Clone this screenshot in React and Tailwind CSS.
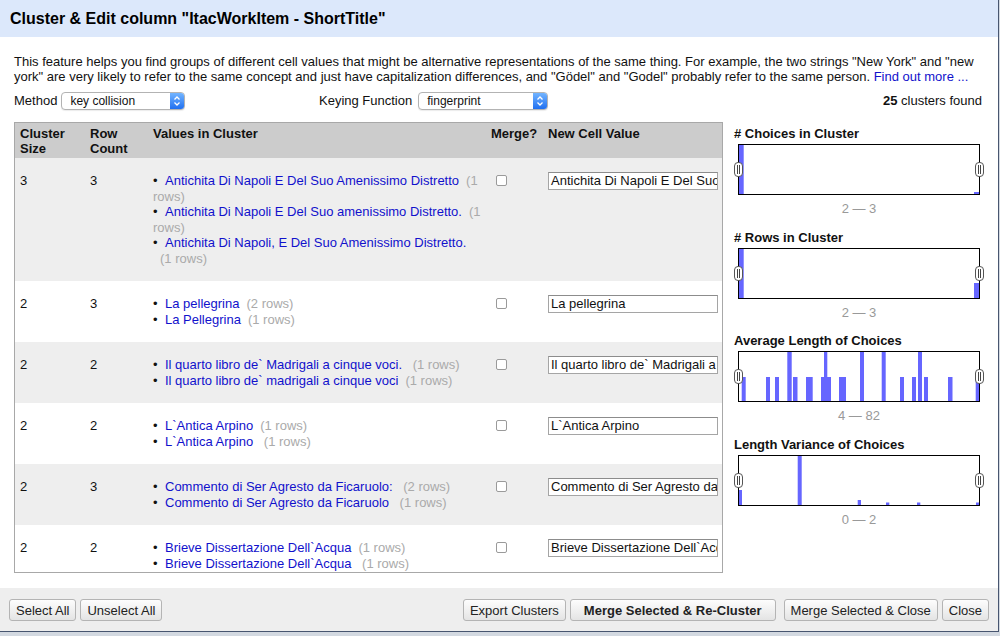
import React from 'react';

const rows = [
  {
    size: 3,
    count: 3,
    values: [
      ['Antichita Di Napoli E Del Suo Amenissimo Distretto', 1],
      ['Antichita Di Napoli E Del Suo amenissimo Distretto.', 1],
      ['Antichita Di Napoli, E Del Suo Amenissimo Distretto.', 1],
    ],
    newValue: 'Antichita Di Napoli E Del Suo Amenissimo Distretto',
  },
  {
    size: 2,
    count: 3,
    values: [
      ['La pellegrina', 2],
      ['La Pellegrina', 1],
    ],
    newValue: 'La pellegrina',
  },
  {
    size: 2,
    count: 2,
    values: [
      ['Il quarto libro de` Madrigali a cinque voci. ', 1],
      ['Il quarto libro de` madrigali a cinque voci', 1],
    ],
    newValue: 'Il quarto libro de` Madrigali a cinque voci.',
  },
  {
    size: 2,
    count: 2,
    values: [
      ['L`Antica Arpino', 1],
      ['L`Antica Arpino ', 1],
    ],
    newValue: 'L`Antica Arpino',
  },
  {
    size: 2,
    count: 3,
    values: [
      ['Commento di Ser Agresto da Ficaruolo: ', 2],
      ['Commento di Ser Agresto da Ficaruolo ', 1],
    ],
    newValue: 'Commento di Ser Agresto da Ficaruolo:',
  },
  {
    size: 2,
    count: 2,
    values: [
      ['Brieve Dissertazione Dell`Acqua', 1],
      ['Brieve Dissertazione Dell`Acqua ', 1],
    ],
    newValue: 'Brieve Dissertazione Dell`Acqua',
  },
];

// bars: [x, width, height] inside a 240x49 plot
const HALF = 24;
const FULL = 49;
const facets = [
  {
    title: '# Choices in Cluster',
    range: '2 — 3',
    bars: [[0, 4.7, FULL], [235, 5, 2]],
  },
  {
    title: '# Rows in Cluster',
    range: '2 — 3',
    bars: [[0, 4.7, FULL], [235, 5, 15]],
  },
  {
    title: 'Average Length of Choices',
    range: '4 — 82',
    bars: [
      [2.7, 4, HALF], [27, 4, HALF], [36, 4, HALF], [48.3, 4.4, FULL],
      [54, 4.5, HALF], [67, 6.7, HALF], [82, 10, HALF], [85, 3.3, FULL],
      [100, 7, HALF], [121, 4, FULL], [142.7, 4, FULL], [161, 4, HALF],
      [173, 4, HALF], [179, 4, FULL], [185, 4, HALF], [209, 4.5, HALF],
      [236.7, 3.3, HALF],
    ],
  },
  {
    title: 'Length Variance of Choices',
    range: '0 — 2',
    bars: [
      [0, 3, 15], [58.7, 4, FULL], [118.7, 3.3, 5], [147, 3.3, 2.5],
      [178, 3.3, 2.5], [237, 3, 2.5],
    ],
  },
];

const Handle = ({ className }) => (
  <svg className={className} width="9" height="15" viewBox="0 0 9 15">
    <rect x="0.5" y="0.5" width="8" height="14" rx="3.5" fill="#fff" stroke="#555" />
    <line x1="3.5" y1="3" x2="3.5" y2="12" stroke="#444" />
    <line x1="5.5" y1="3" x2="5.5" y2="12" stroke="#444" />
  </svg>
);

const Facet = ({ title, range, bars }) => (
  <div className="mb-[13.6px]">
    <div className="font-bold leading-[15px] text-[13px] text-[#111]">{title}</div>
    <div className="relative mt-[3px] ml-[4px] w-[242px] h-[51px] border border-black bg-white">
      <svg className="absolute inset-0" width="240" height="49" viewBox="0 0 240 49">
        {bars.map(([x, w, h], i) => (
          <rect key={i} x={x} y={49 - h} width={w} height={h} fill="#6666ff" />
        ))}
      </svg>
      <Handle className="absolute left-[-5px] top-[17px]" />
      <Handle className="absolute right-[-5px] top-[17px]" />
    </div>
    <div className="mt-[6px] ml-[4px] w-[242px] text-center text-[13px] leading-[15px] text-[#999]">
      {range}
    </div>
  </div>
);

const Select = ({ value, width }) => (
  <div
    className={`flex items-stretch h-[18px] rounded-[4px] border border-[#b3b3b3] bg-white shadow-[0_1px_1px_rgba(0,0,0,0.08)] ${width}`}
  >
    <span className="flex-1 pl-[8px] text-[12px] leading-[16px] text-[#111]">{value}</span>
    <span className="w-[14px] rounded-r-[3px] bg-linear-to-b from-[#72b4ff] to-[#1f6ff0] flex items-center justify-center">
      <svg width="8" height="12" viewBox="0 0 8 12">
        <path d="M1.5 4.5 L4 2 L6.5 4.5 M1.5 7.5 L4 10 L6.5 7.5" fill="none" stroke="#fff" strokeWidth="1.3" />
      </svg>
    </span>
  </div>
);

const Btn = ({ children, bold }) => (
  <button
    className={`h-[22px] rounded-[3px] border border-[#b4b4b4] bg-linear-to-b from-[#fdfdfd] to-[#e4e4e4] text-[13px] leading-none text-[#222] ${
      bold ? 'font-bold px-[13px]' : 'px-[6px]'
    }`}
  >
    {children}
  </button>
);

export default function App() {
  return (
    <div className="w-[1000px] h-[636px] overflow-hidden bg-[#d3d9e1] font-['Liberation_Sans',Arial,sans-serif] text-[13px] text-[#111]">
      <div className="w-[999px] h-[632px] bg-white border-r border-b border-[#485670] flex flex-col">
        {/* title bar */}
        <div className="h-[37px] shrink-0 bg-[#dce8fb] flex items-center pl-[10px]">
          <h1 className="text-[16px] font-bold text-black">
            Cluster &amp; Edit column "ItacWorkItem - ShortTitle"
          </h1>
        </div>

        <div className="pl-[14px] pt-[17px]">
          <p className="leading-[15px] whitespace-nowrap">
            This feature helps you find groups of different cell values that might be alternative representations of the same thing. For example, the two strings "New York" and "new
            <br />
            york" are very likely to refer to the same concept and just have capitalization differences, and "Gödel" and "Godel" probably refer to the same person.{' '}
            <a className="text-[#1111cc]">Find out more ...</a>
          </p>

          <div className="mt-[8px] flex items-center h-[18px] pr-[16px]">
            <div className="w-[305px] flex items-center">
              <span className="mr-[4px]">Method</span>
              <Select value="key collision" width="w-[124px]" />
            </div>
            <div className="flex items-center">
              <span className="mr-[6px]">Keying Function</span>
              <Select value="fingerprint" width="w-[130px]" />
            </div>
            <div className="ml-auto">
              <b>25</b> clusters found
            </div>
          </div>

          <div className="mt-[12px] flex items-start">
            <div className="w-[709px] h-[451px] border border-[#a8a8a8] overflow-hidden">
              <table className="table-fixed border-collapse w-[707px]">
                <colgroup>
                  <col className="w-[70px]" />
                  <col className="w-[63px]" />
                  <col className="w-[338px]" />
                  <col className="w-[57px]" />
                  <col className="w-[179px]" />
                </colgroup>
                <thead>
                  <tr className="bg-[#cccccc] text-left align-top font-bold leading-[15px]">
                    <th className="pl-[5px] pt-[3px] pb-[2px]">Cluster<br />Size</th>
                    <th className="pl-[5px] pt-[3px] pb-[2px]">Row<br />Count</th>
                    <th className="pl-[5px] pt-[3px] pb-[2px]">Values in Cluster</th>
                    <th className="pl-[5px] pt-[3px] pb-[2px]">Merge?</th>
                    <th className="pl-[5px] pt-[3px] pb-[2px]">New Cell Value</th>
                  </tr>
                </thead>
                <tbody>
                  {rows.map((r, i) => (
                    <tr key={i} className={`align-top leading-[15.5px] ${i % 2 === 0 ? 'bg-[#eeeeee]' : 'bg-white'}`}>
                      <td className="pl-[5px] py-[15px]">{r.size}</td>
                      <td className="pl-[5px] py-[15px]">{r.count}</td>
                      <td className="pl-[5px] pr-[4px] py-[15px]">
                        {r.values.map(([v, c], j) => (
                          <div key={j}>
                            <span className="inline-block w-[12px]">•</span>
                            <a className="text-[#1111cc]">{v}</a>
                            <wbr />
                            <span className="pl-[7px] text-[#aaaaaa]">({c} rows)</span>
                          </div>
                        ))}
                      </td>
                      <td className="pl-[10px] py-[15px]">
                        <span className="block mt-[2px] w-[11px] h-[11px] rounded-[2px] border border-[#9a9a9a] bg-white" />
                      </td>
                      <td className="pl-[5px] py-[15px]">
                        <div className="-mt-[1px] w-[170px] h-[18px] border border-[#a5a5a5] border-t-[#8c8c8c] bg-white pl-[2px] leading-[16px] whitespace-nowrap overflow-hidden">
                          {r.newValue}
                        </div>
                      </td>
                    </tr>
                  ))}
                </tbody>
              </table>
            </div>

            <div className="ml-[11px] pt-[4px]">
              {facets.map((f) => (
                <Facet key={f.title} {...f} />
              ))}
            </div>
          </div>
        </div>

        {/* footer */}
        <div className="mt-auto h-[43px] bg-[#eeeeee] flex items-start pt-[11px] px-[9px]">
          <div className="flex gap-[4px]">
            <Btn>Select All</Btn>
            <Btn>Unselect All</Btn>
          </div>
          <div className="ml-auto flex items-center">
            <Btn>Export Clusters</Btn>
            <span className="w-[4px]" />
            <Btn bold>Merge Selected &amp; Re-Cluster</Btn>
            <span className="w-[8px]" />
            <Btn>Merge Selected &amp; Close</Btn>
            <span className="w-[4px]" />
            <Btn>Close</Btn>
          </div>
        </div>
      </div>
    </div>
  );
}
